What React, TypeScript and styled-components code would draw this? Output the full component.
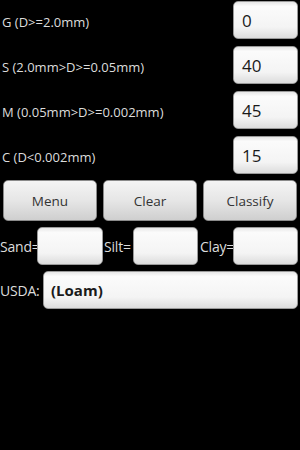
import React from "react";
import styled, { createGlobalStyle } from "styled-components";

const GlobalStyle = createGlobalStyle`
	html, body {
		margin: 0;
		padding: 0;
		background: #000;
		width: 300px;
		height: 450px;
		overflow: hidden;
	}
	body {
		font-family: "Open Sans", "Noto Sans", sans-serif;
	}
`;

const Screen = styled.div`
	width: 300px;
	height: 450px;
	background: #000;
	padding-top: 1px;
	box-sizing: border-box;
`;

const FractionRow = styled.div`
	display: flex;
	align-items: center;
	justify-content: space-between;
	height: 38px;
	margin-bottom: 7px;
	padding: 0 2px 0 2px;
`;

const Label = styled.span`
	color: #dcdcdc;
	font-size: 13px;
	white-space: nowrap;
	padding-top: 3px;
`;

interface BoxProps {
	width: number;
}

const Box = styled.div<BoxProps>`
	width: ${(p) => p.width}px;
	height: 38px;
	box-sizing: border-box;
	border-radius: 5px;
	border: 1px solid #9a9a9a;
	background: linear-gradient(#e6e6e6 0%, #fbfbfb 12%, #f4f4f4 70%, #dcdcdc 100%);
	display: flex;
	align-items: center;
	padding-left: 8px;
	color: #1a1a1a;
	font-size: 17px;
	flex: none;
`;

const ButtonRow = styled.div`
	display: flex;
	justify-content: space-between;
	padding: 0 3px;
	margin-top: -1px;
`;

const Button = styled.div`
	width: 94px;
	height: 41px;
	box-sizing: border-box;
	border-radius: 5px;
	border: 1px solid #8a8a8a;
	background: linear-gradient(#f4f4f4 0%, #e6e6e6 50%, #cfcfcf 100%);
	display: flex;
	align-items: center;
	justify-content: center;
	color: #333;
	font-size: 13.5px;
`;

const ResultRow = styled.div`
	display: flex;
	align-items: center;
	margin-top: 6px;
	padding-right: 2px;
`;

interface SmallLabelProps {
	width: number;
	indent?: number;
}

const SmallLabel = styled.span<SmallLabelProps>`
	color: #dcdcdc;
	font-size: 14px;
	width: ${(p) => p.width}px;
	padding-left: ${(p) => p.indent ?? 0}px;
	box-sizing: border-box;
	flex: none;
	white-space: nowrap;
	letter-spacing: -0.2px;
`;

const UsdaRow = styled.div`
	display: flex;
	align-items: center;
	margin-top: 6px;
	padding-right: 2px;
`;

const UsdaBox = styled(Box)`
	flex: 1;
	font-size: 15px;
	font-weight: bold;
	padding-left: 7px;
`;

const fractions = [
	{ label: "G (D>=2.0mm)", value: "0" },
	{ label: "S (2.0mm>D>=0.05mm)", value: "40" },
	{ label: "M (0.05mm>D>=0.002mm)", value: "45" },
	{ label: "C (D<0.002mm)", value: "15" },
];

const App = () => {
	return (
		<Screen>
			<GlobalStyle />
			{fractions.map((f) => (
				<FractionRow key={f.label}>
					<Label>{f.label}</Label>
					<Box width={65}>{f.value}</Box>
				</FractionRow>
			))}
			<ButtonRow>
				<Button>Menu</Button>
				<Button>Clear</Button>
				<Button>Classify</Button>
			</ButtonRow>
			<ResultRow>
				<SmallLabel width={37}>Sand=</SmallLabel>
				<Box width={66} />
				<SmallLabel width={30} indent={1}>Silt=</SmallLabel>
				<Box width={65} />
				<SmallLabel width={35} indent={2}>Clay=</SmallLabel>
				<Box width={65} />
			</ResultRow>
			<UsdaRow>
				<SmallLabel width={43}>USDA:</SmallLabel>
				<UsdaBox width={254}>(Loam)</UsdaBox>
			</UsdaRow>
		</Screen>
	);
};

export default App;
